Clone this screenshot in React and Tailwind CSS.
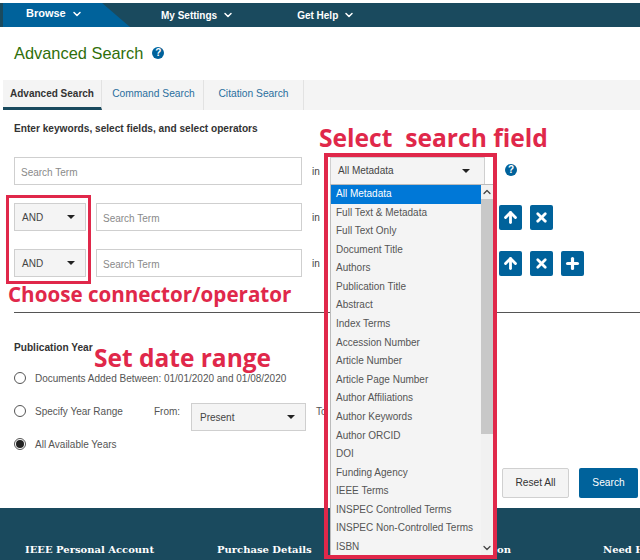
import { ChevronDown, ChevronUp, ArrowUp, X, Plus } from 'lucide-react'

var fields = ['All Metadata', 'Full Text & Metadata', 'Full Text Only', 'Document Title', 'Authors', 'Publication Title', 'Abstract', 'Index Terms', 'Accession Number', 'Article Number', 'Article Page Number', 'Author Affiliations', 'Author Keywords', 'Author ORCID', 'DOI', 'Funding Agency', 'IEEE Terms', 'INSPEC Controlled Terms', 'INSPEC Non-Controlled Terms', 'ISBN']

function Caret() {
  return <span className="w-0 h-0 border-x-[4px] border-x-transparent border-t-[4px] border-t-[#222]" />
}

function Help({ className }) {
  return (
    <span className={'w-[12px] h-[12px] rounded-full bg-[#00629b] text-white text-[10px] font-bold leading-[12px] text-center ' + className}>?</span>
  )
}

function IconBtn({ children }) {
  return <span className="w-[23px] h-[25px] rounded-[2px] bg-[#00629b] text-white flex items-center justify-center">{children}</span>
}

function Select({ label, className }) {
  return (
    <div className={'h-[28px] bg-[#f4f4f4] border border-[#cfcfcf] flex items-center justify-between text-[10px] text-[#444] ' + className}>
      <span>{label}</span>
      <Caret />
    </div>
  )
}

function TermInput({ className }) {
  return (
    <div className={'h-[28px] border border-[#cfcfcf] bg-white flex items-center px-[6px] pt-[2px] text-[10px] text-[#8a8a8a] ' + className}>Search Term</div>
  )
}

function Row({ op, children }) {
  return (
    <div className="flex items-center h-[28px]">
      {op ? <Select label="AND" className="w-[72px] pl-[7px] pr-[10px] mr-[10px]" /> : null}
      <TermInput className={op ? 'w-[206px]' : 'w-[288px]'} />
      <span className="ml-[10px] text-[10px] text-[#444] w-[18px]">in</span>
      <div className="w-[155px]" />
      <div className="flex items-center gap-[8px] ml-[14px]">{children}</div>
    </div>
  )
}

function Radio({ checked, children }) {
  return (
    <div className="flex items-center h-[14px] text-[10px] text-[#555]">
      <span className="w-[12px] h-[12px] rounded-full border border-[#555] bg-white flex items-center justify-center mr-[9px] shrink-0">
        {checked ? <span className="w-[8px] h-[8px] rounded-full bg-[#222]" /> : null}
      </span>
      {children}
    </div>
  )
}

export default function App() {
  return (
    <div className="relative w-[640px] h-[560px] overflow-hidden bg-white flex flex-col font-['Liberation_Sans',Arial,sans-serif]">
      <nav className="mt-[3px] h-[24px] shrink-0 bg-[#1a4a5e] flex items-center text-white text-[10px] font-bold">
        <div className="ml-[3px] w-[127px] h-full bg-[#00629b] [clip-path:polygon(0_0,78%_0,100%_100%,0_100%)] flex items-center pl-[23px] pb-[3px]">
          <span className="text-[11px]">Browse</span>
          <ChevronDown size={12} strokeWidth={3} className="ml-[5px]" />
        </div>
        <div className="ml-[31px] flex items-center">
          My Settings<ChevronDown size={12} strokeWidth={3} className="ml-[5px]" />
        </div>
        <div className="ml-[63px] flex items-center">
          Get Help<ChevronDown size={12} strokeWidth={3} className="ml-[5px]" />
        </div>
      </nav>

      <main className="flex-1 min-h-0">
        <div className="h-[53px] flex items-center px-[14px]">
          <h1 className="text-[16.4px] text-[#2f6f0a]">Advanced Search</h1>
          <Help className="ml-[9px] mb-[2px]" />
        </div>

        <div className="ml-[3px] h-[30px] bg-[#f4f4f4] flex text-[10.25px] text-[#2a6f9e]">
          <div className="w-[99px] border-b-[3px] border-[#1a4a5e] border-r border-r-[#e2e2e2] flex items-center justify-center font-bold text-[10px] text-[#333]">Advanced Search</div>
          <div className="w-[102px] border-r border-[#e2e2e2] pb-[3px] pl-[2px] flex items-center justify-center">Command Search</div>
          <div className="w-[100px] border-r border-[#e2e2e2] pb-[3px] flex items-center justify-center">Citation Search</div>
        </div>

        <p className="ml-[14px] mt-[13px] text-[10.15px] leading-[12px] font-bold text-[#333]">Enter keywords, select fields, and select operators</p>

        <div className="ml-[14px] mt-[22px] flex flex-col gap-[18px]">
          <Row />
          <Row op>
            <IconBtn><ArrowUp size={17} strokeWidth={4} /></IconBtn>
            <IconBtn><X size={15} strokeWidth={4.5} /></IconBtn>
          </Row>
          <Row op>
            <IconBtn><ArrowUp size={17} strokeWidth={4} /></IconBtn>
            <IconBtn><X size={15} strokeWidth={4.5} /></IconBtn>
            <IconBtn><Plus size={17} strokeWidth={4.5} /></IconBtn>
          </Row>
        </div>

        <div className="ml-[14px] mt-[35px] h-px bg-[#555]" />

        <p className="ml-[14px] mt-[29px] text-[10.15px] leading-[12px] font-bold text-[#333]">Publication Year</p>

        <div className="ml-[14px] mt-[17px] flex flex-col gap-[19px]">
          <Radio>Documents Added Between: 01/01/2020 and 01/08/2020</Radio>
          <Radio>
            <span className="w-[119px] shrink-0">Specify Year Range</span>
            <span className="w-[37px] shrink-0">From:</span>
            <Select label="Present" className="w-[115px] px-[8px] pr-[10px] mt-[12px] shrink-0" />
            <span className="ml-[10px]">To</span>
          </Radio>
          <Radio checked>All Available Years</Radio>
        </div>

        <div className="mt-[17px] flex justify-end gap-[10px] pr-[2px] text-[10.2px]">
          <div className="w-[67px] h-[30px] rounded-[2px] border border-[#d0d0d0] bg-[#f4f4f4] text-[#333] flex items-center justify-center">Reset All</div>
          <div className="w-[59px] h-[30px] rounded-[2px] bg-[#00629b] text-white flex items-center justify-center">Search</div>
        </div>
      </main>

      <footer className="h-[52px] shrink-0 bg-[#1a4a5e] text-white font-['DejaVu_Serif',serif] font-bold text-[10px] flex pt-[34px] pl-[25px] whitespace-nowrap">
        <span className="w-[192px] shrink-0">IEEE Personal Account</span>
        <span className="w-[186px] shrink-0">Purchase Details</span>
        <span className="w-[200px] shrink-0">Profile Information</span>
        <span className="shrink-0">Need Help?</span>
      </footer>

      {/* open field dropdown sits over the rows */}
      <div className="absolute left-[330px] top-[157px] w-[164px] text-[10px] text-[#555]">
        <div className="w-[155px] h-[27px]">
          <Select label="All Metadata" className="h-[27px] pl-[7px] pr-[14px] pb-[2px] border-b-0" />
        </div>
        <div className="h-[372px] bg-[#f4f4f4] border border-[#bbb] border-r-0 flex overflow-hidden">
          <ul className="w-[150px] shrink-0">
            {fields.map(function(f, i) {
              return (
                <li key={f} className={'h-[18.58px] leading-[18px] pl-[5px] whitespace-nowrap ' + (i === 0 ? 'bg-[#0078d7] text-white' : '')}>{f}</li>
              )
            })}
          </ul>
          <div className="w-[13px] flex flex-col bg-[#f1f1f1] text-[#444]">
            <ChevronUp size={12} strokeWidth={2.5} className="h-[14px] shrink-0" />
            <div className="h-[235px] bg-[#c8c8c8]" />
            <div className="flex-1" />
            <ChevronDown size={12} strokeWidth={2.5} className="h-[14px] shrink-0" />
          </div>
        </div>
      </div>
      <Help className="absolute left-[505px] top-[164px]" />

      {/* red annotations */}
      <div className="absolute left-[324px] top-[153px] w-[173px] h-[406px] border-[4px] border-[#e0284a]" />
      <div className="absolute left-[6px] top-[195px] w-[85px] h-[89px] border-[3px] border-[#e0284a]" />
      <div className="absolute left-[319px] top-[122px] text-[24.6px] leading-[32px] font-bold text-[#e0284a] font-['Open_Sans',sans-serif] whitespace-pre">Select  search field</div>
      <div className="absolute left-[8px] top-[280px] text-[20.6px] leading-[28px] font-bold text-[#e0284a] font-['Open_Sans',sans-serif] whitespace-pre">Choose connector/operator</div>
      <div className="absolute left-[94px] top-[342px] text-[24.5px] leading-[32px] font-bold text-[#e0284a] font-['Open_Sans',sans-serif] whitespace-pre">Set date range</div>
    </div>
  )
}
